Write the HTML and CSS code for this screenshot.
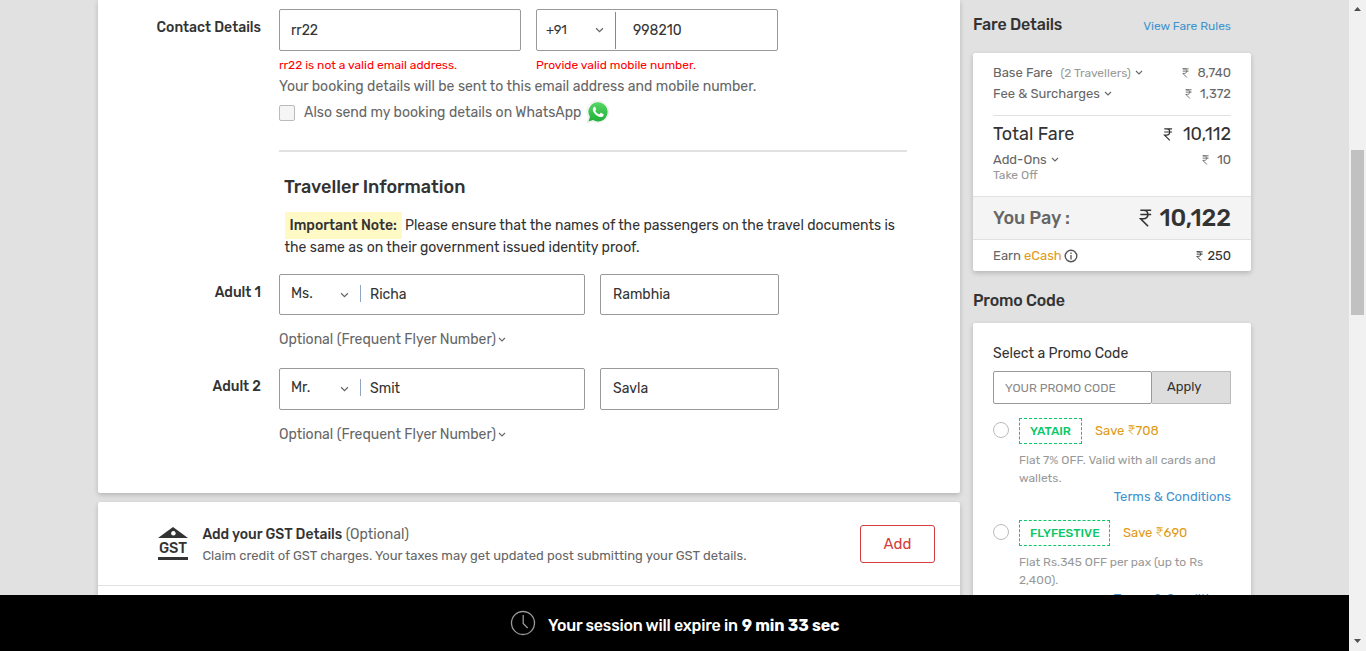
FILE: index.html
```html
<!DOCTYPE html>
<html lang="en">
<head>
<meta charset="utf-8">
<title>Traveller details</title>
<link rel="stylesheet" href="styles.css">
</head>
<body>
<svg class="defs" width="0" height="0" aria-hidden="true">
  <symbol id="chev" viewBox="0 0 8 5"><path d="M1 1l3 3 3-3" fill="none" stroke="currentColor" stroke-width="1.1"/></symbol>
  <symbol id="rupee" viewBox="0 0 10 14"><path d="M1 1h8.4M1 4.3h8.4M1 1h2.4c4.6 0 4.6 6.6 0 6.6H1.2L7 13.4" fill="none" stroke="currentColor" stroke-width="1.3"/></symbol>
</svg>
<div class="screen">
  <div class="app">
    <div class="content">
      <main class="main">
        <section class="card travellers">
          <div class="row contact">
            <div class="label contact-label"><span class="t-contact">Contact Details</span></div>
            <div class="fields">
              <div class="inputs">
                <div class="input email"><span class="t-email">rr22</span></div>
                <div class="input phone"><span class="code">+91</span><svg class="chev big"><use href="#chev"/></svg><span class="number">998210</span></div>
              </div>
              <div class="errors"><span class="err-mail">rr22 is not a valid email address.</span><span class="err-phone">Provide valid mobile number.</span></div>
              <p class="hint"><span class="t-hint">Your booking details will be sent to this email address and mobile number.</span></p>
              <div class="whatsapp">
                <span class="checkbox"></span><span class="t-wa">Also send my booking details on WhatsApp</span>
                <svg class="wa" viewBox="0 0 24 24">
                  <defs><linearGradient id="wg" x1="0" y1="0" x2="0" y2="1"><stop offset="0" stop-color="#56d765"/><stop offset="1" stop-color="#20b038"/></linearGradient></defs>
                  <path class="wa-halo" d="M12 1a10.7 10.7 0 0 1 0 21.400a10.700 10.700 0 0 1-5.200-1.300L1 23l1.700-5.600A10.700 10.700 0 0 1 12 1z"/>
                  <path d="M12 2.200a9.600 9.600 0 1 1-4.800 17.900L2.500 21.500l1.400-4.600A9.600 9.600 0 0 1 12 2.200z" fill="url(#wg)"/>
                  <path d="M8.700 6.700c-.6 0-1.900.9-1.900 2.700 0 3.200 4.700 7.600 8 7.600 1.500 0 2.900-.9 2.900-2.300 0-.5-.1-.6-.5-.8l-2-.95c-.4-.2-.6-.1-.85.2l-.8 1c-.2.250-.4.250-.7.100-1.400-.6-2.600-1.700-3.400-3-.15-.3-.1-.5.100-.7l.6-.75c.15-.2.15-.4.050-.65l-.85-2c-.15-.35-.3-.45-.65-.45z" fill="#fff"/>
                </svg>
              </div>
            </div>
          </div>
          <hr class="rule">
          <h2 class="heading"><span class="t-head">Traveller Information</span></h2>
          <p class="note"><b class="mark">Important Note:</b><span class="t-note1">Please ensure that the names of the passengers on the travel documents is</span><br><span class="t-note2">the same as on their government issued identity proof.</span></p>
          <div class="row adult adult-one">
            <div class="label"><span>Adult 1</span></div>
            <div class="fields">
              <div class="inputs">
                <div class="input first"><span class="salute">Ms.</span><svg class="chev big"><use href="#chev"/></svg><span class="bar"></span><span class="given">Richa</span></div>
                <div class="input last"><span class="given">Rambhia</span></div>
              </div>
              <div class="optional"><span>Optional (Frequent Flyer Number)</span><svg class="chev"><use href="#chev"/></svg></div>
            </div>
          </div>
          <div class="row adult adult-two">
            <div class="label"><span>Adult 2</span></div>
            <div class="fields">
              <div class="inputs">
                <div class="input first"><span class="salute">Mr.</span><svg class="chev big"><use href="#chev"/></svg><span class="bar"></span><span class="given">Smit</span></div>
                <div class="input last"><span class="given">Savla</span></div>
              </div>
              <div class="optional"><span>Optional (Frequent Flyer Number)</span><svg class="chev"><use href="#chev"/></svg></div>
            </div>
          </div>
        </section>
        <section class="card gst">
          <div class="gst-row">
            <div class="gst-icon">
              <svg class="roof" viewBox="0 0 30 11"><path fill-rule="evenodd" d="M0 11L15 0l15 11zM15.400 4a2.300 2.300 0 1 0 .01 0z" fill="#333"/></svg>
              <span class="gst-word">GST</span>
            </div>
            <div class="gst-text">
              <div class="gst-title"><b>Add your GST Details</b> <span>(Optional)</span></div>
              <div class="gst-sub"><span>Claim credit of GST charges. Your taxes may get updated post submitting your GST details.</span></div>
            </div>
            <div class="add">Add</div>
          </div>
        </section>
      </main>
      <aside class="side">
        <div class="side-head"><span class="side-title t-fare">Fare Details</span><span class="rules">View Fare Rules</span></div>
        <section class="card fare">
          <div class="lines">
            <div class="line base"><span class="t-base">Base Fare</span><span class="pax">(2 Travellers)</span><svg class="chev"><use href="#chev"/></svg><span class="amt"><svg class="rs"><use href="#rupee"/></svg><span>8,740</span></span></div>
            <div class="line fee"><span class="t-fee">Fee &amp; Surcharges</span><svg class="chev"><use href="#chev"/></svg><span class="amt"><svg class="rs"><use href="#rupee"/></svg><span>1,372</span></span></div>
            <div class="line total"><span class="t-total">Total Fare</span><span class="amt"><svg class="rs"><use href="#rupee"/></svg><span>10,112</span></span></div>
            <div class="line addons"><span class="t-addons">Add-Ons</span><svg class="chev"><use href="#chev"/></svg><span class="amt"><svg class="rs"><use href="#rupee"/></svg><span>10</span></span></div>
            <div class="takeoff">Take Off</div>
          </div>
          <div class="pay"><span class="t-pay">You Pay :</span><span class="amt"><svg class="rs"><use href="#rupee"/></svg><b>10,122</b></span></div>
          <div class="earn"><span class="t-earn">Earn <em>eCash</em></span>
            <svg class="info" viewBox="0 0 14 14"><circle cx="7" cy="7" r="5.800" fill="none" stroke="#555" stroke-width="1.400"/><path d="M7 3.500v1.500M7 6v4.500" stroke="#555" stroke-width="1.300"/></svg>
            <span class="amt"><svg class="rs"><use href="#rupee"/></svg><span>250</span></span></div>
        </section>
        <div class="side-title t-promo">Promo Code</div>
        <section class="card promo">
          <div class="select"><span>Select a Promo Code</span></div>
          <div class="entry"><div class="entry-box"><span>YOUR PROMO CODE</span></div><div class="apply"><span>Apply</span></div></div>
          <div class="offer">
            <div class="offer-head"><i class="radio"></i><span class="coupon yat"><span>YATAIR</span></span><span class="save">Save <svg class="rs"><use href="#rupee"/></svg>708</span></div>
            <p class="desc"><span class="d1">Flat 7% OFF. Valid with all cards and</span><br><span class="d2">wallets.</span></p>
            <div class="terms"><span>Terms &amp; Conditions</span></div>
          </div>
          <div class="offer">
            <div class="offer-head"><i class="radio"></i><span class="coupon fly"><span>FLYFESTIVE</span></span><span class="save">Save <svg class="rs"><use href="#rupee"/></svg>690</span></div>
            <p class="desc"><span class="d3">Flat Rs.345 OFF per pax (up to Rs</span><br><span class="d4">2,400).</span></p>
            <div class="terms"><span>Terms &amp; Conditions</span></div>
          </div>
        </section>
      </aside>
    </div>
    <footer class="session">
      <svg class="clock" viewBox="0 0 26 26"><circle cx="13" cy="13" r="11.500" fill="none" stroke="#999" stroke-width="1.300"/><path d="M13.200 5v8.500l4.500 4.500" fill="none" stroke="#999" stroke-width="1.300"/></svg>
      <span class="t-session">Your session will expire in</span><b class="t-time">9 min 33 sec</b>
    </footer>
  </div>
  <div class="scrollbar">
    <svg class="arrow" viewBox="0 0 7 4"><path d="M0 4h7L3.500 0z" fill="#505050"/></svg>
    <div class="thumb"></div>
    <svg class="arrow" viewBox="0 0 7 4"><path d="M0 0h7L3.500 4z" fill="#505050"/></svg>
  </div>
</div>
</body>
</html>
```
FILE: styles.css
```css
* { box-sizing: border-box; }
body { margin: 0; font-family: Rubik, Roboto, "Liberation Sans", sans-serif; font-size: 14px; color: #333; background: #e1e1e1; overflow: hidden; }
p, h2 { margin: 0; }
b { font-weight: 500; }
span, b { white-space: nowrap; }
svg { flex: none; }
.defs { display: none; }
.screen { display: flex; width: 1366px; height: 651px; }
.app { display: flex; flex-direction: column; width: 1349px; }
.content { display: flex; gap: 13px; height: 595px; padding-left: 98px; overflow: hidden; flex: none; }
.main { width: 862px; flex: none; }
.side { width: 278px; flex: none; }
.card { background: #fff; border-radius: 2px; box-shadow: 0 2px 5px rgba(0,0,0,.2); }
.chev { width: 8px; height: 5px; color: #666; }
.chev.big { width: 9px; height: 6px; }

/* contact and travellers */
.travellers { height: 493px; padding-top: 9px; border-radius: 0 0 2px 2px; }
.row { display: flex; gap: 17px; }
.label { width: 164px; padding-right: 1px; text-align: right; font-size: 14px; font-weight: 500; line-height: 38px; }
.inputs { display: flex; gap: 15px; }
.input { display: flex; align-items: center; height: 42px; border: 1px solid #999; border-radius: 2px; padding-left: 11px; }
.email, .phone { width: 242px; }
.phone { padding-left: 9px; }
.code { width: 49px; margin-bottom: 1px; font-size: 13px; letter-spacing: -.3px; }
.number { display: flex; align-items: center; height: 37px; margin-left: 11px; border-left: 1px solid #888; padding-left: 17px; }
.errors { display: flex; margin-top: 6px; font-size: 12px; line-height: 16px; color: #f00; }
.err-mail { width: 257px; }
.hint { margin-top: 4px; line-height: 20px; color: #666; }
.whatsapp { display: flex; align-items: center; height: 24px; margin-top: 3px; color: #666; }
.checkbox { width: 16px; height: 16px; margin: 1px 9px 0 0; border: 1px solid #bbb; border-radius: 2px; background: #f5f5f5; }
.wa { width: 24px; height: 24px; margin-left: 5px; }
.wa-halo { fill: #fff; stroke: #e4e4e4; stroke-width: .8; }
.rule { width: 628px; height: 2px; margin: 26px 0 0 181px; border: 0; background: #e1e1e1; }
.heading { margin: 23px 0 0 186px; font-size: 18px; font-weight: 500; line-height: 24px; }
.note { margin: 16px 0 0 186.5px; line-height: 22px; }
.mark { margin-right: 3px; padding: 5px; background: #fffac5; }
.adult-one { margin-top: 15px; }
.adult-two { margin-top: 19px; }
.adult-one .input { height: 41px; }
.first { width: 306px; }
.last { width: 179px; padding-left: 12px; }
.salute { width: 50px; margin-bottom: 3px; }
.first .chev { margin-left: -1px; }
.bar { width: 1px; height: 17px; margin: 0 9px 3px 11px; background: #8fa6c0; }
.given { margin-bottom: 1px; }
.optional { display: flex; align-items: center; gap: 2px; height: 20px; margin-top: 14px; color: #666; }

/* GST */
.gst { height: 120px; margin-top: 9px; }
.gst-row { display: flex; height: 84px; padding: 23px 25px 0 60px; border-bottom: 1px solid #e1e1e1; }
.gst-icon { display: flex; flex-direction: column; align-items: center; width: 30px; height: 33px; margin-top: 2px; border-bottom: 3px solid #333; }
.roof { width: 30px; height: 11px; }
.gst-word { margin-top: 1px; font-size: 14.5px; line-height: 18px; font-weight: 500; }
.gst-text { flex: 1; margin-left: 14.4px; }
.gst-title { line-height: 20px; font-size: 14px; }
.gst-title span { color: #666; }
.gst-sub { line-height: 20px; margin-top: 1px; font-size: 13px; color: #666; }
.add { width: 75px; height: 38px; border: 1px solid #d43d3d; border-radius: 3px; color: #d43d3d; font-size: 15px; line-height: 36px; text-align: center; }

/* sidebar */
.side-head { display: flex; justify-content: space-between; align-items: center; height: 53px; padding: 0 20px 4px 0; }
.side-title { font-size: 16px; font-weight: 500; line-height: 20px; letter-spacing: -.18px; }
.rules { margin-top: 2px; font-size: 12px; color: #3f93cf; }
.fare { height: 218px; }
.lines { height: 143px; padding: 9px 20px 0; }
.line { display: flex; align-items: center; height: 21px; font-size: 13px; color: #666; }
.line .chev { margin-left: 4px; }
.pax { margin-left: 8px; font-size: 12px; color: #999; }
.amt { display: flex; align-items: center; margin-left: auto; gap: 8px; }
.rs { width: 7px; height: 10px; }
.fee { margin-bottom: 11px; }
.total { height: 35px; padding-top: 2px; border-top: 1px solid #e1e1e1; font-size: 18px; color: #333; }
.total .rs { width: 10px; height: 13px; }
.total .amt { gap: 10px; }
.addons { margin-top: -1px; }
.takeoff { font-size: 12px; line-height: 14px; margin-top: -2px; color: #999; }
.pay { display: flex; align-items: center; height: 44px; padding: 0 20px; border: solid #e1e1e1; border-width: 1px 0; background: #f4f4f4; font-size: 18px; font-weight: 500; color: #666; }
.pay .amt { font-size: 24px; letter-spacing: -.1px; color: #333; gap: 7px; }
.pay .rs { width: 13px; height: 18px; }
.earn { display: flex; align-items: center; height: 31px; padding: 0 20px; font-size: 13px; color: #666; }
.earn em { font-style: normal; color: #e09b14; }
.earn .amt { gap: 4px; color: #333; }
.info { width: 14px; height: 14px; margin-left: 2px; }
.t-promo { margin: 20px 0 12px; }
.promo { height: 400px; padding: 21px 20px 0; }
.select { line-height: 20px; }
.entry { display: flex; height: 33px; margin-top: 7px; }
.entry-box { width: 159px; border: 1px solid #999; border-radius: 2px; padding-left: 11px; font-size: 12px; line-height: 33px; color: #888; }
.apply { width: 79px; border: 1px solid #bbb; border-left: 0; background: #ddd; padding-left: 15px; font-size: 13px; line-height: 29px; }
.offer-head { display: flex; align-items: center; height: 26px; margin-top: 14px; }
.offer + .offer .offer-head { margin-top: 13px; }
.radio { width: 16px; height: 16px; margin: 0 10px 2px 0; border: 1px solid #bbb; border-radius: 50%; }
.coupon { height: 26px; border: 1px dashed #0ac767; padding-left: 10px; font-size: 12px; font-weight: 500; line-height: 24px; color: #0ac767; }
.yat { width: 63px; }
.fly { width: 91px; }
.save { margin: 0 0 2px 13px; font-size: 13px; color: #e09b14; }
.save .rs { margin-right: 1px; }
.desc { margin: 7px 0 0 26px; font-size: 12px; line-height: 18px; color: #999; }
.terms { height: 20px; line-height: 19px; text-align: right; font-size: 13px; color: #3f93cf; }

/* session bar */
.session { display: flex; align-items: center; height: 56px; padding: 4px 0 0 510px; background: #000; color: #fff; font-size: 16px; font-weight: 500; flex: none; }
.clock { width: 26px; height: 26px; margin: -5px 12px 0 0; }
.t-session { letter-spacing: -.22px; }
.t-time { margin-left: 4px; font-weight: 700; letter-spacing: -.1px; }

/* scrollbar */
.scrollbar { display: flex; flex-direction: column; align-items: center; width: 17px; background: #f1f1f1; padding: 7px 0 8px; }
.arrow { width: 7px; height: 4px; }
.thumb { width: 13px; height: 165px; margin: 139px 0 auto; background: #c1c1c1; }
```
